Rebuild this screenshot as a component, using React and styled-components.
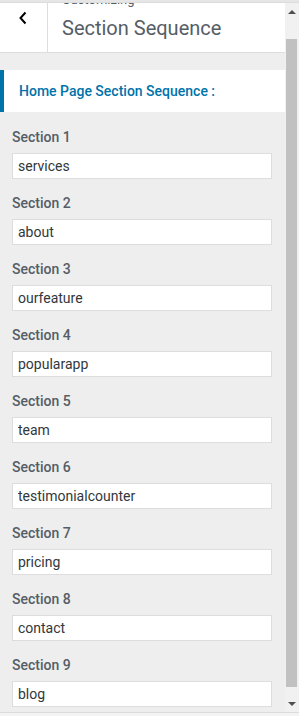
import React from 'react';
import styled, { createGlobalStyle } from 'styled-components';

const sections = [
	'services',
	'about',
	'ourfeature',
	'popularapp',
	'team',
	'testimonialcounter',
	'pricing',
	'contact',
	'blog',
];

const GlobalStyle = createGlobalStyle`
	html, body {
		margin: 0;
		padding: 0;
		background: #eeeeee;
	}
	body {
		font-family: Roboto, "Liberation Sans", sans-serif;
	}
`;

const App = () => {
	return (
		<>
			<GlobalStyle />
			<Frame>
				<TopStrip />
				<Body>
					<Panel>
						<Header>
							<BackBtn>
								<svg width="10" height="14" viewBox="0 0 10 14">
									<polyline
										points="7.5,1.5 2.5,7 7.5,12.5"
										fill="none"
										stroke="#000"
										strokeWidth="2"
									/>
								</svg>
							</BackBtn>
							<TitleBlock>
								<Crumb>Customizing</Crumb>
								<Title>Section Sequence</Title>
							</TitleBlock>
						</Header>
						<Heading>Home Page Section Sequence :</Heading>
						<List>
							{sections.map((value, i) => (
								<Field key={value}>
									<Label>Section {i + 1}</Label>
									<Input type="text" defaultValue={value} />
								</Field>
							))}
						</List>
					</Panel>
					<Scrollbar>
						<Arrow />
						<Track>
							<Thumb />
						</Track>
						<Arrow $down />
					</Scrollbar>
				</Body>
				<BottomStrip />
			</Frame>
		</>
	);
};

const Frame = styled.div`
	width: 299px;
	height: 716px;
	display: flex;
	flex-direction: column;
	overflow: hidden;
	background: #eeeeee;
`;

const TopStrip = styled.div`
	height: 2px;
	background: #e6e6e6;
	border-bottom: 1px solid #dcdcdc;
`;

const BottomStrip = styled.div`
	height: 3px;
	background: #f3f3f3;
	border-top: 1px solid #dcdcdc;
`;

const Body = styled.div`
	flex: 1;
	display: flex;
	min-height: 0;
`;

const Panel = styled.div`
	width: 285px;
	display: flex;
	flex-direction: column;
	background: #eeeeee;
	overflow: hidden;
`;

const Header = styled.div`
	height: 49px;
	flex: none;
	display: flex;
	background: #fff;
	border-bottom: 1px solid #dddddd;
	overflow: hidden;
`;

const BackBtn = styled.button`
	width: 48px;
	flex: none;
	display: flex;
	justify-content: center;
	align-items: flex-start;
	padding: 8px 2px 0 0;
	background: #fff;
	border: none;
	border-right: 1px solid #dddddd;
`;

const TitleBlock = styled.div`
	display: flex;
	flex-direction: column;
	padding-left: 14px;
	margin-top: -12px;
`;

const Crumb = styled.span`
	font-size: 13px;
	line-height: 18px;
	color: #555d66;
`;

const Title = styled.h1`
	margin: 5px 0 0;
	font-size: 20px;
	font-weight: 400;
	line-height: 28px;
	color: #555d66;
`;

const Heading = styled.h3`
	margin: 17px 0 0;
	height: 42px;
	flex: none;
	display: flex;
	align-items: center;
	padding-left: 15px;
	border-left: 4px solid #0073aa;
	background: #fff;
	font-size: 14px;
	font-weight: 500;
	color: #0073aa;
`;

const List = styled.div`
	display: flex;
	flex-direction: column;
	gap: 14px;
	padding: 15px 13px 0 12px;
`;

const Field = styled.div`
	display: flex;
	flex-direction: column;
	gap: 6px;
`;

const Label = styled.label`
	font-size: 14px;
	font-weight: 500;
	line-height: 20px;
	color: #555d66;
`;

const Input = styled.input`
	box-sizing: border-box;
	width: 100%;
	height: 26px;
	margin: 0;
	padding: 0 5px;
	border: 1px solid #dddddd;
	border-radius: 0;
	background: #fff;
	font-family: Roboto, "Liberation Sans", sans-serif;
	font-size: 14px;
	color: #32373c;
	outline: none;
`;

const Scrollbar = styled.div`
	width: 14px;
	display: flex;
	flex-direction: column;
	background: #f1f1f1;
`;

const Arrow = styled.div`
	height: 17px;
	display: flex;
	justify-content: center;
	align-items: center;

	&::after {
		content: '';
		width: 0;
		height: 0;
		margin-right: 1px;
		border-left: 4px solid transparent;
		border-right: 4px solid transparent;
		${({ $down }) =>
			$down ? 'border-top: 4px solid #505050;' : 'border-bottom: 4px solid #505050;'}
	}
`;

const Track = styled.div`
	flex: 1;
	display: flex;
	flex-direction: column;
	padding: 19px 2px 8px 1px;
`;

const Thumb = styled.div`
	flex: 1;
	background: #c1c1c1;
`;

export default App;
